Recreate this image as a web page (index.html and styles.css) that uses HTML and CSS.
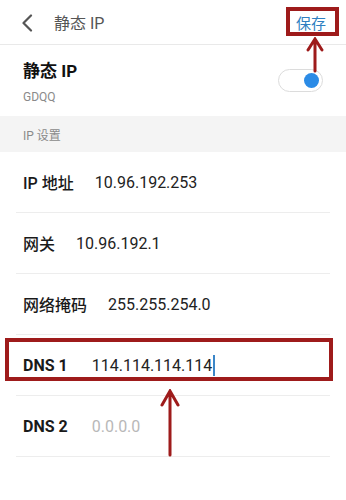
FILE: index.html
```html
<!DOCTYPE html>
<html lang="zh-CN">
<head>
<meta charset="utf-8">
<title>静态 IP</title>
<link rel="stylesheet" href="styles.css">
</head>
<body>
<div class="page">
  <header class="topbar">
    <svg class="back" width="12" height="18" viewBox="0 0 12 18"><path d="M10 1.5 L2.5 9 L10 16.5" fill="none" stroke="#555" stroke-width="2.2" stroke-linecap="round" stroke-linejoin="round"/></svg>
    <span class="title">静态 IP</span>
    <span class="save">保存</span>
  </header>

  <div class="switch-row">
    <div class="switch-text">
      <div class="switch-title">静态 IP</div>
      <div class="switch-sub">GDQQ</div>
    </div>
    <div class="toggle"><span class="knob"></span></div>
  </div>

  <div class="section">IP 设置</div>

  <div class="list">
    <div class="row"><span class="label">IP 地址</span><span class="value">10.96.192.253</span></div>
    <div class="row"><span class="label">网关</span><span class="value">10.96.192.1</span></div>
    <div class="row"><span class="label">网络掩码</span><span class="value">255.255.254.0</span></div>
    <div class="row"><span class="label latin">DNS 1</span><span class="value">114.114.114.114<span class="cursor"></span></span></div>
    <div class="row"><span class="label latin">DNS 2</span><span class="value placeholder">0.0.0.0</span></div>
  </div>

  <div class="mark mark-save"></div>
  <div class="mark mark-dns"></div>
  <svg class="arrow arrow-top" width="20" height="36" viewBox="0 0 20 36"><path d="M10 34 L10 3 M3 13 L10 2 L17 13" fill="none" stroke="#9e1b1b" stroke-width="3" stroke-linecap="round" stroke-linejoin="miter"/></svg>
  <svg class="arrow arrow-bottom" width="22" height="68" viewBox="0 0 22 68"><path d="M11 66 L11 3 M3 16 L11 2 L19 16" fill="none" stroke="#9e1b1b" stroke-width="3" stroke-linecap="round" stroke-linejoin="miter"/></svg>
</div>
</body>
</html>
```

FILE: styles.css
```css
* { box-sizing: border-box; }
html, body { margin: 0; padding: 0; background: #fff; }
body {
  font-family: Roboto, "Noto Sans CJK SC", "Noto Sans", sans-serif;
  color: #222;
}
.page {
  position: relative;
  width: 346px;
  height: 500px;
  overflow: hidden;
  background: #fff;
}
.topbar {
  height: 45px;
  border-bottom: 1px solid #e9e9e9;
  display: flex;
  align-items: center;
  padding: 0 0 0 21px;
}
.back { display: block; margin-top: 1px; }
.title {
  margin-left: 21px;
  font-size: 16px;
  color: #555;
}
.save {
  margin-left: auto;
  margin-right: 20px;
  font-size: 15px;
  color: #2e7fc1;
}
.switch-row {
  height: 71px;
  display: flex;
  align-items: center;
  padding: 0 22px 0 23px;
}
.switch-text { flex: 1; display: flex; flex-direction: column; }
.switch-title {
  font-size: 17px;
  font-weight: 700;
  color: #111;
  line-height: 22px;
  margin-top: 2px;
}
.switch-sub {
  font-size: 12px;
  color: #8a8a8a;
  line-height: 14px;
  margin-top: 8px;
}
.toggle {
  width: 45px;
  height: 23px;
  border: 1.5px solid #dcdcdc;
  border-radius: 12px;
  background: #fff;
  display: flex;
  align-items: center;
  justify-content: flex-end;
  padding-right: 3px;
  margin-right: 1px;
}
.knob {
  width: 15px;
  height: 15px;
  border-radius: 50%;
  background: #2b8be6;
}
.section {
  height: 36px;
  background: #f4f4f4;
  font-size: 12px;
  color: #8a8a8a;
  display: flex;
  align-items: center;
  padding-left: 23px;
}
.list { padding: 0 16px; }
.row {
  height: 61px;
  border-bottom: 1px solid #ededed;
  display: flex;
  align-items: center;
  padding-left: 7px;
  font-size: 16px;
}
.label {
  font-weight: 500;
  color: #1a1a1a;
  margin-right: 21px;
}
.label.latin { font-weight: 700; margin-right: 24px; }
.value { color: #222; display: flex; align-items: center; }
.placeholder { color: #b8b8b8; }
.cursor {
  display: inline-block;
  width: 1.5px;
  height: 21px;
  background: #3b86c8;
  margin-left: 1px;
}
.mark {
  position: absolute;
  border: 4px solid #9e1b1b;
}
.mark-save { left: 286px; top: 7px; width: 53px; height: 29px; }
.mark-dns { left: 5px; top: 338px; width: 328px; height: 43px; }
.arrow { position: absolute; }
.arrow-top { left: 305px; top: 37px; }
.arrow-bottom { left: 159px; top: 389px; }
```
